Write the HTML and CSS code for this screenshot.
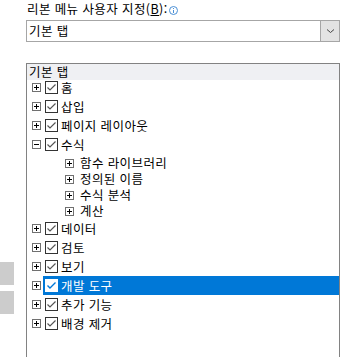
FILE: index.html
```html
<!DOCTYPE html>
<html lang="ko">
<head>
<meta charset="utf-8">
<link rel="stylesheet" href="styles.css">
</head>
<body>
<div class="page">
  <div class="label">리본 메뉴 사용자 지정(<u>B</u>):<span class="info"><svg width="9" height="9" viewBox="0 0 9 9"><circle cx="4.5" cy="4.5" r="4" fill="none" stroke="#4a8fd6" stroke-width="1"/><rect x="4" y="2" width="1" height="1" fill="#4a8fd6"/><rect x="4" y="4" width="1" height="3" fill="#4a8fd6"/></svg></span></div>
  <div class="select">
    <div class="select-text">기본 탭</div>
    <div class="select-btn"><svg width="9" height="6" viewBox="0 0 9 6"><path d="M1 1.5 L4.5 4.5 L8 1.5" fill="none" stroke="#444" stroke-width="1"/></svg></div>
  </div>
  <div class="main">
    <div class="side">
      <div class="side-btn"></div>
      <div class="side-btn"></div>
    </div>
    <div class="tree">
      <div class="tree-head">기본 탭</div>
      <div class="row"><span class="exp plus"></span><span class="chk"></span><span class="txt">홈</span></div>
      <div class="row"><span class="exp plus"></span><span class="chk"></span><span class="txt">삽입</span></div>
      <div class="row"><span class="exp plus"></span><span class="chk"></span><span class="txt">페이지 레이아웃</span></div>
      <div class="row"><span class="exp minus"></span><span class="chk"></span><span class="txt">수식</span></div>
      <div class="row sub first"><span class="exp plus"></span><span class="txt">함수 라이브러리</span></div>
      <div class="row sub"><span class="exp plus"></span><span class="txt">정의된 이름</span></div>
      <div class="row sub"><span class="exp plus"></span><span class="txt">수식 분석</span></div>
      <div class="row sub"><span class="exp plus"></span><span class="txt">계산</span></div>
      <div class="row"><span class="exp plus"></span><span class="chk"></span><span class="txt">데이터</span></div>
      <div class="row"><span class="exp plus"></span><span class="chk"></span><span class="txt">검토</span></div>
      <div class="row"><span class="exp plus"></span><span class="chk"></span><span class="txt">보기</span></div>
      <div class="row selected"><span class="exp plus"></span><span class="chk"></span><span class="txt">개발 도구</span></div>
      <div class="row"><span class="exp plus"></span><span class="chk"></span><span class="txt">추가 기능</span></div>
      <div class="row"><span class="exp plus"></span><span class="chk"></span><span class="txt">배경 제거</span></div>
    </div>
  </div>
</div>
</body>
</html>
```
FILE: styles.css
```css
html, body {
  margin: 0;
  padding: 0;
  background: #ffffff;
  overflow: hidden;
}
.page {
  width: 349px;
  height: 357px;
  font-family: "Noto Sans CJK KR", "Noto Sans", sans-serif;
  font-size: 12.5px;
  letter-spacing: 0.4px;
  color: #000;
}
.label {
  height: 20px;
  padding-left: 27px;
  line-height: 16px;
  display: flex;
  align-items: center;
  box-sizing: border-box;
  padding-bottom: 2px;
}
.label u {
  text-decoration: underline;
}
.info {
  display: inline-flex;
  margin-left: 1px;
  margin-top: 2px;
}
.select {
  margin-left: 26px;
  width: 314px;
  height: 22px;
  box-sizing: border-box;
  border: 1px solid #a6a6a6;
  display: flex;
}
.select-text {
  flex: 1;
  padding-left: 2px;
  line-height: 20px;
}
.select-btn {
  width: 18px;
  background: #e3e3e3;
  border-left: 1px solid #a6a6a6;
  display: flex;
  align-items: center;
  justify-content: center;
}
.main {
  display: flex;
  margin-top: 21px;
}
.side {
  width: 26px;
  display: flex;
  flex-direction: column;
  padding-top: 199px;
  gap: 6px;
}
.side-btn {
  width: 14px;
  height: 23px;
  background: #cccccc;
}
.tree {
  width: 314px;
  height: 300px;
  box-sizing: border-box;
  border: 1px solid #828282;
}
.tree-head {
  background: #eff0f3;
  height: 16px;
  line-height: 15px;
  padding-left: 2px;
  margin-bottom: -2px;
}
.row {
  display: flex;
  align-items: center;
  height: 19px;
  padding-left: 5px;
}
.row.sub {
  height: 16px;
  padding-left: 38px;
}
.row.sub.first {
  margin-top: 1px;
}
.exp {
  width: 9px;
  height: 9px;
  box-sizing: border-box;
  border: 1px solid #707070;
  position: relative;
  flex: none;
}
.exp::before {
  content: "";
  position: absolute;
  left: 1px;
  top: 3px;
  width: 5px;
  height: 1px;
  background: #000;
}
.exp.plus::after {
  content: "";
  position: absolute;
  left: 3px;
  top: 1px;
  width: 1px;
  height: 5px;
  background: #000;
}
.chk {
  width: 13px;
  height: 13px;
  box-sizing: border-box;
  border: 1px solid #333;
  margin-left: 4px;
  flex: none;
  background: #fff url("data:image/svg+xml;utf8,<svg xmlns='http://www.w3.org/2000/svg' width='11' height='11' viewBox='0 0 11 11'><path d='M1.5 5.5 L4 8 L9.5 2.5' fill='none' stroke='%23555' stroke-width='1.2'/></svg>") no-repeat center;
}
.txt {
  margin-left: 3px;
  white-space: nowrap;
  line-height: 14px;
}
.row.sub .txt {
  margin-left: 6px;
}
.row.selected {
  background: #0078d7;
  color: #fff;
  margin-left: 16px;
  padding-left: 0;
}
.row.selected .exp {
  margin-left: -11px;
  background: #fff;
}
.row.selected .chk {
  margin-left: 4px;
  border-color: #fff;
  background: #fff url("data:image/svg+xml;utf8,<svg xmlns='http://www.w3.org/2000/svg' width='11' height='11' viewBox='0 0 11 11'><path d='M1.5 5.5 L4 8 L9.5 2.5' fill='none' stroke='%230078d7' stroke-width='1.4'/></svg>") no-repeat center;
}
```
